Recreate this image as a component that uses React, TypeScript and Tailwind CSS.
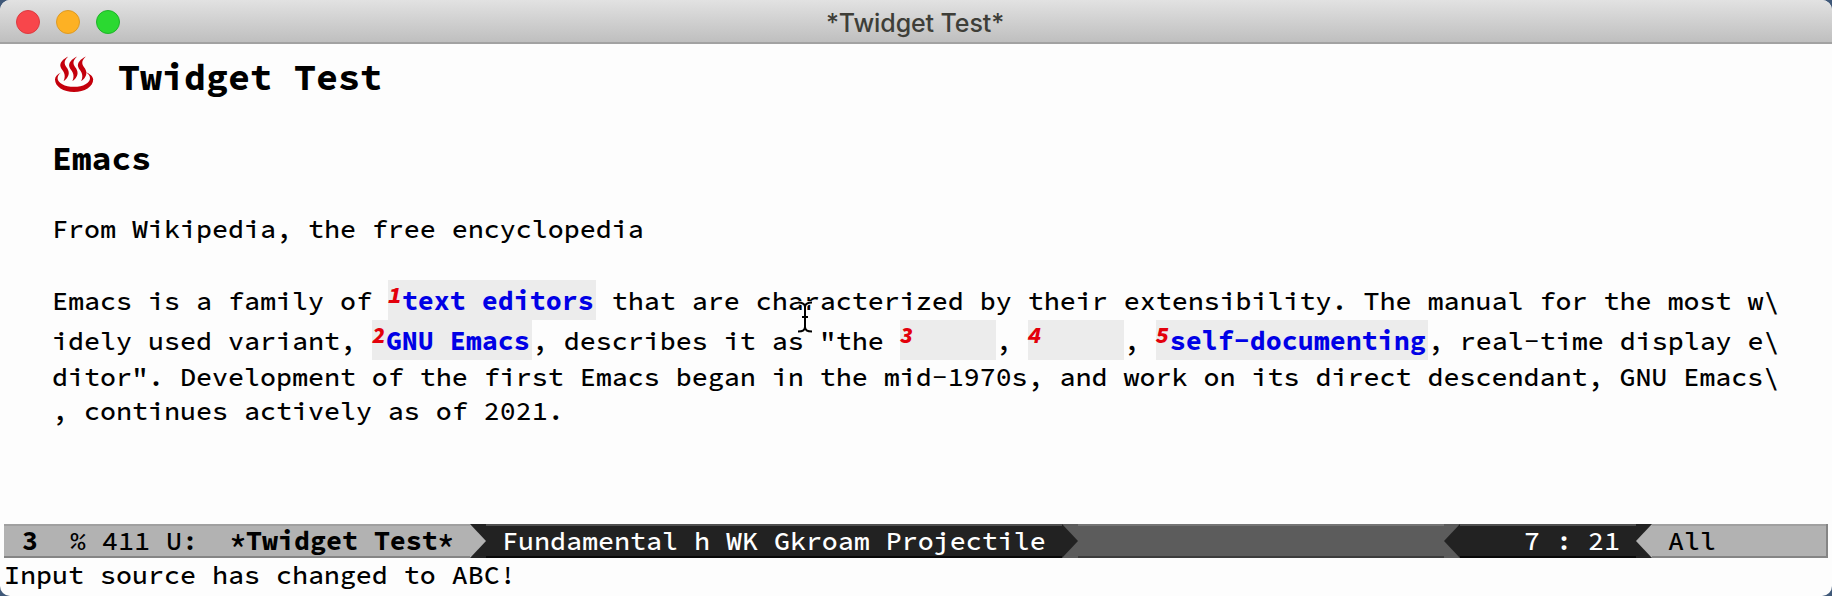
import type { ReactNode } from "react";

const BODY_ROW = "h-[34px] leading-[33px] whitespace-pre";

function Field({ n, width, children }: { n: number; width: string; children?: ReactNode }) {
  return (
    <span className={`flex h-10 bg-[#ececec] ${width}`}>
      <span className="block w-[14px] text-[23px] leading-[30px] font-black text-[#e3000b] italic">{n}</span>
      <span className="block pt-1 font-bold text-[#0000e6]">{children}</span>
    </span>
  );
}

function Plain({ children }: { children: string }) {
  return <span className="block pt-1">{children}</span>;
}

function HotSprings() {
  return (
    <svg className="mt-[2px] h-[37px] w-[40px]" viewBox="0 0 40 37" fill="#c4000c">
      <path d="M7 16.4C3 18.2 1 20.6 1 23.6C1 30.8 9.4 36 20 36C30.6 36 39.2 30.8 39.2 23.6C39.2 20.6 36 17.6 31.6 16.2C34.6 18 36 19.8 36 22.2C36 27 29.2 30.8 20 30.8C10.8 30.8 3.6 27 3.6 22.2C3.6 20 4.8 18 7 16.4Z" />
      <path d="M14.2 0.4C9 3 5.2 6.6 6.6 11C8 14.8 13 17.4 9.6 25.2C15 21.4 16 17 13.4 12.6C11 8.8 8.4 6 14.2 0.4Z" />
      <path d="M23 0.4C17.8 3 14 6.6 15.4 11C16.8 14.8 21.8 17.4 18.4 25.2C23.8 21.4 24.8 17 22.2 12.6C19.8 8.8 17.2 6 23 0.4Z" />
      <path d="M31.8 0.4C26.6 3 22.8 6.6 24.2 11C25.6 14.8 30.6 17.4 27.2 25.2C32.6 21.4 33.6 17 31 12.6C28.6 8.8 26 6 31.8 0.4Z" />
    </svg>
  );
}

function TitleBar() {
  return (
    <header className="grid h-11 shrink-0 grid-cols-[1fr_auto_1fr] items-center border-b-2 border-[#a2a2a2] bg-linear-to-b from-[#e2e2e2] to-[#bfbfbf]">
      <div className="flex gap-4 pt-[2px] pl-4">
        <span className="size-6 rounded-full border border-[#dc3b40] bg-[#f8464b]" />
        <span className="size-6 rounded-full border border-[#dd9a24] bg-[#fdb124]" />
        <span className="size-6 rounded-full border border-[#1fb32a] bg-[#2bd931]" />
      </div>
      <h1 className="-ml-[2px] pt-[3px] font-[Inter,sans-serif] text-[25px] leading-8 tracking-[-0.1px] text-[#3e3e38]">*Twidget Test*</h1>
    </header>
  );
}

function ModeLine() {
  return (
    <div className="mx-1 flex h-[34px] shrink-0 leading-[33px] whitespace-pre text-white">
      <div className="flex w-[466px] bg-[#b2b2b2] pl-[18px] text-black shadow-[inset_0_2px_0_#a0a0a0,inset_0_-2px_0_#858585]">
        <b>3</b>
        <span>{"  % 411 U:  "}</span>
        <b>*Twidget Test*</b>
      </div>
      <svg className="h-[34px] w-4 bg-[#222222]" viewBox="0 0 16 34">
        <path d="M0 0L16 17L0 34Z" fill="#b2b2b2" />
      </svg>
      <div className="w-[576px] bg-[#222222] pl-[16px] shadow-[inset_0_2px_0_#505050,inset_0_-2px_0_#080808]">
        Fundamental h WK Gkroam Projectile
      </div>
      <svg className="h-[34px] w-4 bg-[#5c5c5c]" viewBox="0 0 16 34">
        <path d="M0 0L16 17L0 34Z" fill="#222222" />
      </svg>
      <div className="flex-1 bg-[#5c5c5c] shadow-[inset_0_2px_0_#757575,inset_0_-2px_0_#3c3c3c]" />
      <svg className="h-[34px] w-4 bg-[#5c5c5c]" viewBox="0 0 16 34">
        <path d="M16 0L0 17L16 34Z" fill="#222222" />
      </svg>
      <div className="w-[176px] bg-[#222222] pl-[64px] shadow-[inset_0_2px_0_#505050,inset_0_-2px_0_#080808]">
        7 : 21
      </div>
      <svg className="h-[34px] w-4 bg-[#222222]" viewBox="0 0 16 34">
        <path d="M16 0L0 17L16 34Z" fill="#b2b2b2" />
      </svg>
      <div className="w-[176px] bg-[#b2b2b2] pl-4 text-black shadow-[inset_-2px_0_0_#858585,inset_0_2px_0_#a0a0a0,inset_0_-2px_0_#858585]">
        All
      </div>
    </div>
  );
}

export default function App() {
  return (
    <div className="h-[596px] w-[1832px] bg-[#3f5878]">
      <div className="relative flex h-full flex-col overflow-hidden rounded-[10px] bg-[#fdfdfd] font-['Source_Code_Pro','Liberation_Mono',monospace] text-[26.667px] font-medium text-black">
        <TitleBar />
        <main className="flex flex-1 flex-col pl-[52px]">
          <h2 className="flex pt-[10px] pl-[2px] text-[36.667px] leading-[46px] font-bold">
            <HotSprings />
            <span className="block pl-6">Twidget Test</span>
          </h2>
          <h3 className="mt-[39px] h-[39px] text-[33px] leading-10 font-bold">Emacs</h3>
          <p className={`mt-[34px] ${BODY_ROW}`}>From Wikipedia, the free encyclopedia</p>
          <div className="mt-[34px] leading-[33px] whitespace-pre">
            <div className="flex h-10">
              <Plain>{"Emacs is a family of "}</Plain>
              <Field n={1} width="w-[208px]">text editors</Field>
              <Plain>{" that are characterized by their extensibility. The manual for the most w\\"}</Plain>
            </div>
            <div className="flex h-10">
              <Plain>{"idely used variant, "}</Plain>
              <Field n={2} width="w-[160px]">GNU Emacs</Field>
              <Plain>{', describes it as "the '}</Plain>
              <Field n={3} width="w-[96px]" />
              <Plain>{", "}</Plain>
              <Field n={4} width="w-[96px]" />
              <Plain>{", "}</Plain>
              <Field n={5} width="w-[272px]">self-documenting</Field>
              <Plain>{", real-time display e\\"}</Plain>
            </div>
            <div className={BODY_ROW}>{'ditor". Development of the first Emacs began in the mid-1970s, and work on its direct descendant, GNU Emacs\\'}</div>
            <div className={BODY_ROW}>, continues actively as of 2021.</div>
          </div>
        </main>
        <ModeLine />
        <div className="h-[38px] shrink-0 pl-1 leading-[33px] whitespace-pre">Input source has changed to ABC!</div>
        <svg className="absolute top-[301px] left-[797px] h-[32px] w-4" viewBox="0 0 16 32" fill="none">
          <path d="M1 1.5C5 1.5 8 3 8 6V26C8 29 5 30.5 1 30.5M15 1.5C11 1.5 8 3 8 6M8 26C8 29 11 30.5 15 30.5M5 16H11" stroke="#ffffff" strokeWidth="4" />
          <path d="M1 1.5C5 1.5 8 3 8 6V26C8 29 5 30.5 1 30.5M15 1.5C11 1.5 8 3 8 6M8 26C8 29 11 30.5 15 30.5M5 16H11" stroke="#000000" strokeWidth="2" />
        </svg>
      </div>
    </div>
  );
}
